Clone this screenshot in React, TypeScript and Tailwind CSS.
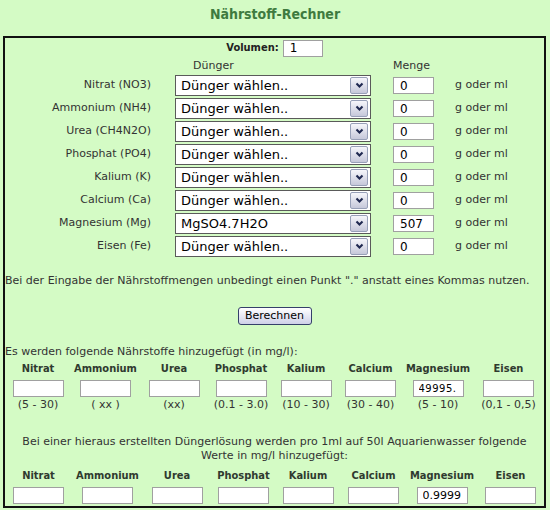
import React from "react";

const rows: { label: string; value: string; amount: string }[] = [
  { label: "Nitrat (NO3)", value: "Dünger wählen..", amount: "0" },
  { label: "Ammonium (NH4)", value: "Dünger wählen..", amount: "0" },
  { label: "Urea (CH4N2O)", value: "Dünger wählen..", amount: "0" },
  { label: "Phosphat (PO4)", value: "Dünger wählen..", amount: "0" },
  { label: "Kalium (K)", value: "Dünger wählen..", amount: "0" },
  { label: "Calcium (Ca)", value: "Dünger wählen..", amount: "0" },
  { label: "Magnesium (Mg)", value: "MgSO4.7H2O", amount: "507" },
  { label: "Eisen (Fe)", value: "Dünger wählen..", amount: "0" },
];

const heads = ["Nitrat", "Ammonium", "Urea", "Phosphat", "Kalium", "Calcium", "Magnesium", "Eisen"];
const ranges = ["(5 - 30)", "( xx )", "(xx)", "(0.1 - 3.0)", "(10 - 30)", "(30 - 40)", "(5 - 10)", "(0,1 - 0,5)"];
const res1 = ["", "", "", "", "", "", "49995.", ""];
const res2 = ["", "", "", "", "", "", "0.9999", ""];

const boldFont = "font-['DejaVu_Sans_Condensed','DejaVu_Sans',sans-serif] font-bold";

function FakeSelect({ value }: { value: string }) {
  return (
    <div className="ml-[24px] flex h-[21px] w-[196px] items-center border border-[#5a5a5a] bg-white pl-[5px] pr-[2px] text-[13px] text-black">
      <span className="flex-1 leading-[19px]">{value}</span>
      <div className="flex h-[17px] w-[18px] items-center justify-center rounded-[2px] border border-[#98a0b8] bg-gradient-to-b from-[#f6f6fb] to-[#c6c8da]">
        <svg width="9" height="7" viewBox="0 0 9 7">
          <polyline points="1.5,1.5 4.5,4.5 7.5,1.5" fill="none" stroke="#1f2850" strokeWidth="2.1" />
        </svg>
      </div>
    </div>
  );
}

export default function App() {
  return (
    <div className="h-[510px] w-[550px] bg-[#d4fbc5] pt-[5px] font-['DejaVu_Sans',sans-serif] text-[11px] text-[#333]">
      <h1 className={`h-[31px] text-center text-[14px] leading-[18px] text-[#3f7a3f] ${boldFont}`}>Nährstoff-Rechner</h1>
      <div className="ml-[3px] h-[472px] w-[543px] border-2 border-[#111]">
        <div className="flex h-[20px] items-center justify-center gap-[4px]">
          <span className={`text-[11px] text-[#222] ${boldFont}`}>Volumen:</span>
          <input
            defaultValue="1"
            className="h-[17px] w-[40px] border border-[#a0a0a0] bg-white px-[6px] text-[12px] text-black outline-none"
          />
        </div>
        <div className="flex h-[16px] items-center">
          <span className="ml-[188px] w-[200px]">Dünger</span>
          <span>Menge</span>
        </div>
        {rows.map((r) => (
          <div key={r.label} className="flex h-[23px] items-center">
            <div className="w-[146px] text-right">{r.label}</div>
            <FakeSelect value={r.value} />
            <input
              defaultValue={r.amount}
              className="ml-[22px] h-[17px] w-[41px] border border-[#a0a0a0] bg-white px-[6px] text-[12px] text-black outline-none"
            />
            <span className="ml-[21px]">g oder ml</span>
          </div>
        ))}
        <p className="mt-[16px] leading-[14px]">
          Bei der Eingabe der Nährstoffmengen unbedingt einen Punkt "." anstatt eines Kommas nutzen.
        </p>
        <div className="mt-[19px] flex justify-center">
          <button className="h-[18px] w-[74px] rounded-[3px] border border-[#35406a] bg-gradient-to-b from-white to-[#cfd1e8] text-[11px] leading-[16px] text-black">
            Berechnen
          </button>
        </div>
        <p className="mt-[20px] leading-[14px]">Es werden folgende Nährstoffe hinzugefügt (in mg/l):</p>
        <div className="grid grid-cols-[66px_69px_68px_66px_64px_65px_70px_71px]">
          {heads.map((h) => (
            <div key={"h1" + h} className={`flex h-[20px] items-center justify-center text-[11px] text-[#2f3a2f] ${boldFont}`}>
              {h}
            </div>
          ))}
          {res1.map((v, i) => (
            <div key={"i1" + i} className="flex justify-center pt-[1px]">
              <input
                defaultValue={v}
                className="h-[17px] w-[51px] border border-[#a0a0a0] bg-white px-[5px] text-[10px] tracking-[0.5px] text-black outline-none"
              />
            </div>
          ))}
          {ranges.map((r) => (
            <div key={"r" + r} className="mt-[1px] text-center leading-[14px]">
              {r}
            </div>
          ))}
        </div>
        <p className="mt-[23px] text-center leading-[14px]">
          Bei einer hieraus erstellten Düngerlösung werden pro 1ml auf 50l Aquarienwasser folgende
          <br />
          Werte in mg/l hinzugefügt:
        </p>
        <div className="mt-[6px] grid grid-cols-[67px_71px_68px_65px_64px_67px_70px_67px]">
          {heads.map((h) => (
            <div key={"h2" + h} className={`flex h-[14px] items-center justify-center text-[11px] text-[#2f3a2f] ${boldFont}`}>
              {h}
            </div>
          ))}
          {res2.map((v, i) => (
            <div key={"i2" + i} className="mt-[4px] flex justify-center">
              <input
                defaultValue={v}
                className="h-[17px] w-[51px] border border-[#a0a0a0] bg-white px-[5px] text-[11px] text-black outline-none"
              />
            </div>
          ))}
        </div>
      </div>
    </div>
  );
}
